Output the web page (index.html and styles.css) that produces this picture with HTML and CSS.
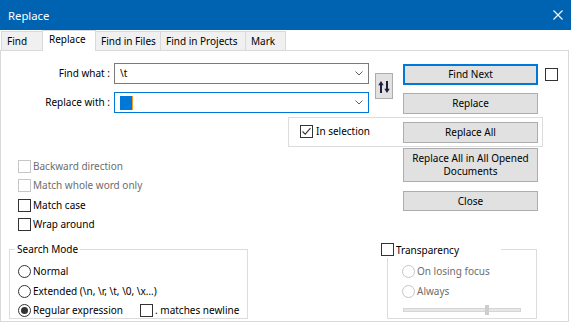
FILE: index.html
```html
<!DOCTYPE html>
<html>
<head>
<meta charset="utf-8">
<title>Replace</title>
<link rel="stylesheet" href="styles.css">
</head>
<body>
<div class="titlebar">
  <span class="title">Replace</span>
  <svg class="close" width="10" height="10" viewBox="0 0 10 10"><path d="M0.5 0.5 L9.5 9.5 M9.5 0.5 L0.5 9.5" stroke="#fff" stroke-width="1.1" fill="none"/></svg>
</div>
<div class="tabs">
  <div class="tab w-find">Find</div>
  <div class="tab active w-replace">Replace</div>
  <div class="tab w-files">Find in Files</div>
  <div class="tab w-proj">Find in Projects</div>
  <div class="tab w-mark last">Mark</div>
</div>
<div class="panel">
  <div class="top">
    <div class="lbl row1">Find what :</div>
    <div class="combo row1"><span class="val">\t</span><svg class="chev" width="8" height="5" viewBox="0 0 8 5"><path d="M0.5 0.5 L4 4 L7.5 0.5" stroke="#606060" fill="none"/></svg></div>
    <div class="swap"><svg width="12" height="12" viewBox="0 0 12 12"><path d="M3 0 L0.3 4.2 H2 V12 H4 V4.2 H5.7 Z" fill="#1e1e3c"/><path d="M9 12 L6.3 7.8 H8 V0 H10 V7.8 H11.7 Z" fill="#1e1e3c"/></svg></div>
    <div class="btn default findnext">Find Next</div>
    <span class="cb topcb"></span>
    <div class="lbl row2">Replace with :</div>
    <div class="combo focus row2"><span class="selblk"></span><svg class="chev" width="8" height="5" viewBox="0 0 8 5"><path d="M0.5 0.5 L4 4 L7.5 0.5" stroke="#606060" fill="none"/></svg></div>
    <div class="btn replace">Replace</div>
  </div>
  <div class="selbox">
    <span class="cb checked"><svg width="11" height="11" viewBox="0 0 11 11"><path d="M1.5 5.5 L4.2 8.2 L9.5 2.2" stroke="#333" stroke-width="1.1" fill="none"/></svg></span>
    <span class="seltext">In selection</span>
    <div class="btn replaceall">Replace All</div>
  </div>
  <div class="mid">
    <div class="opts">
      <div class="opt disabled"><span class="cb"></span><span>Backward direction</span></div>
      <div class="opt disabled tall"><span class="cb"></span><span>Match whole word only</span></div>
      <div class="opt"><span class="cb"></span><span>Match case</span></div>
      <div class="opt"><span class="cb"></span><span>Wrap around</span></div>
    </div>
    <div class="btns">
      <div class="btn big">Replace All in All Opened<br>Documents</div>
      <div class="btn closebtn">Close</div>
    </div>
  </div>
  <div class="bottom">
    <div class="group mode">
      <div class="gtitle">Search Mode</div>
      <div class="ropt r-a"><span class="radio"></span><span>Normal</span></div>
      <div class="ropt r-b"><span class="radio"></span><span>Extended (\n, \r, \t, \0, \x…)</span></div>
      <div class="ropt"><span class="rlabel"><span class="radio on"></span><span>Regular expression</span></span><span class="cb nl"></span><span>. matches newline</span></div>
    </div>
    <div class="group transp">
      <div class="ttitle"><span class="cb"></span><span>Transparency</span></div>
      <div class="ropt r-a disabled"><span class="radio"></span><span>On losing focus</span></div>
      <div class="ropt r-b disabled"><span class="radio"></span><span>Always</span></div>
      <div class="slider"><div class="track"></div><div class="thumb"></div></div>
    </div>
  </div>
</div>
</body>
</html>
```

FILE: styles.css
```css
* { box-sizing: border-box; }
html, body { margin: 0; padding: 0; }
body {
  width: 571px;
  height: 322px;
  overflow: hidden;
  background: #fff;
  color: #000;
  font-family: "Noto Sans", "Open Sans", sans-serif;
  font-size: 10px;
}

.titlebar {
  height: 30px;
  background: #0063b1;
  color: #fff;
  display: flex;
  align-items: center;
  padding-left: 8px;
  font-size: 11.3px;
}
.close { margin-left: auto; margin-right: 8px; }

.tabs {
  display: flex;
  align-items: flex-end;
  height: 20px;
  padding-left: 1px;
  position: relative;
  z-index: 2;
}
.tab {
  height: 19px;
  background: #f0f0f0;
  border-top: 1px solid #d9d9d9;
  border-left: 1px solid #d9d9d9;
  padding-left: 5px;
  padding-top: 3px;
  line-height: 13px;
  white-space: nowrap;
}
.tab.last { border-right: 1px solid #d9d9d9; }
.tab.active {
  height: 21px;
  margin-bottom: -1px;
  background: #fff;
  border-right: 1px solid #d9d9d9;
  margin-right: -1px;
  padding-left: 6px;
  padding-top: 2px;
  position: relative;
  z-index: 3;
}
.w-find { width: 41px; }
.w-replace { width: 54px; }
.w-files { width: 65px; }
.w-proj { width: 85px; }
.w-mark { width: 41px; }

.panel {
  width: 569px;
  height: 272px;
  border: 1px solid #d9d9d9;
  position: relative;
  z-index: 1;
}

.top {
  display: grid;
  grid-template-columns: 113px 255px 6px 18px 10px 135px 7px 13px;
  grid-template-rows: 21px 21px;
  row-gap: 8px;
  margin-top: 12px;
}
.lbl {
  grid-column: 1;
  text-align: right;
  padding-right: 4px;
  line-height: 21px;
}
.lbl.row1 { grid-row: 1; }
.lbl.row2 { grid-row: 2; }
.combo {
  grid-column: 2;
  height: 21px;
  border: 1px solid #7a7a7a;
  background: #fff;
  display: flex;
  align-items: center;
  padding-left: 5px;
  position: relative;
}
.combo.row1 { grid-row: 1; }
.combo.row2 { grid-row: 2; }
.combo.focus { border-color: #0078d7; }
.val { line-height: 19px; }
.selblk {
  width: 13px;
  height: 14px;
  background: #0078d7;
  border-right: 1px solid #f39a1e;
}
.chev { margin-left: auto; margin-right: 5px; }

.swap {
  grid-column: 4;
  grid-row: 1 / 3;
  align-self: start;
  margin-top: 10px;
  height: 26px;
  background: #e1e1e1;
  border: 1px solid #adadad;
  display: flex;
  align-items: center;
  justify-content: center;
  padding-top: 1px;
}

.btn {
  background: #e1e1e1;
  border: 1px solid #adadad;
  display: flex;
  align-items: center;
  justify-content: center;
  text-align: center;
  line-height: 13px;
  height: 21px;
}
.btn.default { border: 2px solid #0078d7; }
.findnext { grid-column: 6; grid-row: 1; align-self: start; margin-top: 1px; }
.replace { grid-column: 6; grid-row: 2; align-self: start; margin-top: 1px; }

.cb {
  display: inline-block;
  flex: none;
  width: 13px;
  height: 13px;
  border: 1px solid #333;
  background: #fff;
}
.topcb { grid-column: 8; grid-row: 1; align-self: start; margin-top: 5px; }
.cb.checked { display: flex; align-items: center; justify-content: center; }

.selbox {
  margin-left: 287px;
  margin-top: 4px;
  width: 255px;
  height: 30px;
  border: 1px solid #dcdcdc;
  display: flex;
  align-items: flex-start;
  padding-left: 11px;
}
.selbox .cb { margin-top: 7px; }
.seltext { margin-left: 3px; margin-top: 6px; line-height: 15px; }
.replaceall { width: 135px; margin-left: auto; margin-right: 4px; margin-top: 4px; }

.mid { display: flex; height: 84px; }
.opts { width: 402px; padding-left: 17px; padding-top: 13px; }
.opt { display: flex; align-items: flex-start; height: 19px; line-height: 13px; }
.opt.tall { height: 20px; }
.opt span + span { margin-left: 2px; }
.disabled { color: #6d6d6d; }
.disabled .cb, .disabled .radio { border-color: #c6c6c6; }
.btns { width: 135px; padding-top: 1px; }
.btn.big { height: 34px; }
.closebtn { height: 20px; margin-top: 9px; }

.bottom { display: flex; margin-top: 18px; }
.group {
  position: relative;
  border: 1px solid #dcdcdc;
  height: 70px;
}
.mode { margin-left: 8px; width: 239px; padding-left: 8px; padding-top: 15px; }
.transp { margin-left: 139px; width: 150px; padding-left: 14px; padding-top: 15px; }
.gtitle {
  position: absolute;
  top: -8px;
  left: 5px;
  padding: 0 2px;
  background: #fff;
  line-height: 15px;
}
.ttitle {
  position: absolute;
  top: -9px;
  left: -7px;
  width: 120px;
  height: 17px;
  background: #fff;
  display: flex;
  align-items: center;
  gap: 2px;
}
.ropt { display: flex; align-items: flex-start; height: 19px; line-height: 13px; }
.ropt.r-a { height: 20px; }
.ropt span + span { margin-left: 2px; }
.ropt .cb.nl { margin-left: 0; }
.rlabel { display: flex; width: 122px; }
.rlabel span + span { margin-left: 2px; }
.radio {
  flex: none;
  width: 13px;
  height: 13px;
  border: 1px solid #333;
  border-radius: 50%;
  background: #fff;
  position: relative;
}
.radio.on::after {
  content: "";
  position: absolute;
  left: 2px;
  top: 2px;
  width: 7px;
  height: 7px;
  border-radius: 50%;
  background: #333;
}
.slider { position: relative; margin-left: 1px; margin-top: 1px; width: 118px; height: 10px; }
.track {
  position: absolute;
  left: 0;
  top: 3px;
  width: 118px;
  height: 4px;
  background: #e7e7e7;
  border: 1px solid #d6d6d6;
}
.thumb {
  position: absolute;
  left: 82px;
  top: 0;
  width: 4px;
  height: 10px;
  background: #cdcdcd;
}
```
